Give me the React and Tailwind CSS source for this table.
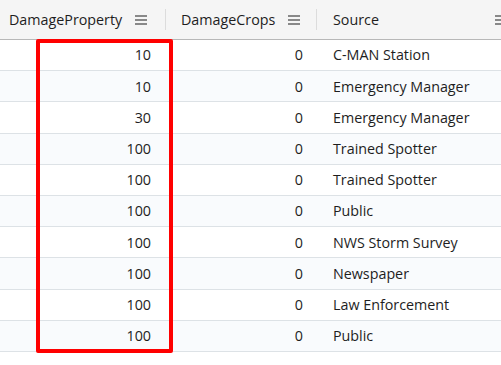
const ROWS = [
  { prop: 10, crops: 0, source: 'C-MAN Station' },
  { prop: 10, crops: 0, source: 'Emergency Manager' },
  { prop: 30, crops: 0, source: 'Emergency Manager' },
  { prop: 100, crops: 0, source: 'Trained Spotter' },
  { prop: 100, crops: 0, source: 'Trained Spotter' },
  { prop: 100, crops: 0, source: 'Public' },
  { prop: 100, crops: 0, source: 'NWS Storm Survey' },
  { prop: 100, crops: 0, source: 'Newspaper' },
  { prop: 100, crops: 0, source: 'Law Enforcement' },
  { prop: 100, crops: 0, source: 'Public' },
]

function MenuIcon() {
  return (
    <svg width="12" height="10" viewBox="0 0 12 10" className="shrink-0">
      <path d="M0 1h12M0 5h12M0 9h12" stroke="#666" strokeWidth="1.4" />
    </svg>
  )
}

function HeaderCell({ label, width, last }) {
  return (
    <div className={`relative flex items-center h-full pl-[9px] ${width}`}>
      <span className="text-[14.3px] text-[#1e1e1e]">{label}</span>
      <span className="ml-[13px]"><MenuIcon /></span>
      {!last && <div className="absolute right-0 top-[9px] bottom-[9px] w-px bg-[#dcdcdc]" />}
    </div>
  )
}

export default function App() {
  return (
    <div className="relative w-[501px] h-[365px] overflow-hidden bg-white" style={{ fontFamily: '"Open Sans", "Noto Sans", sans-serif' }}>
      {/* header */}
      <div className="flex h-[40px] bg-[#f5f5f5] border-b border-[#b8b8b8]">
        <HeaderCell label="DamageProperty" width="w-[166px] shrink-0" />
        <HeaderCell label="DamageCrops" width="w-[151px] shrink-0 pl-[15px]" />
        <div className="flex items-center h-full pl-[16px] flex-1 min-w-0">
          <span className="text-[14.3px] text-[#1e1e1e]">Source</span>
          <span className="ml-auto -mr-[6px]"><MenuIcon /></span>
        </div>
      </div>

      {/* rows */}
      {ROWS.map((r, i) => (
        <div
          key={i}
          className={`flex h-[31.2px] border-b border-[#dde2e6] text-[14.3px] text-[#1e1e1e] ${i % 2 ? 'bg-[#f9fbfd]' : 'bg-white'}`}
        >
          <div className="w-[166px] shrink-0 flex items-center justify-end pr-[15px]">{r.prop}</div>
          <div className="w-[151px] shrink-0 flex items-center justify-end pr-[14px]">{r.crops}</div>
          <div className="flex-1 flex items-center pl-[16px]">{r.source}</div>
        </div>
      ))}

      {/* highlight */}
      <div className="absolute left-[36px] top-[39px] w-[137px] h-[314px] border-4 border-[#ff0000] rounded-[2px] pointer-events-none" />
    </div>
  )
}
